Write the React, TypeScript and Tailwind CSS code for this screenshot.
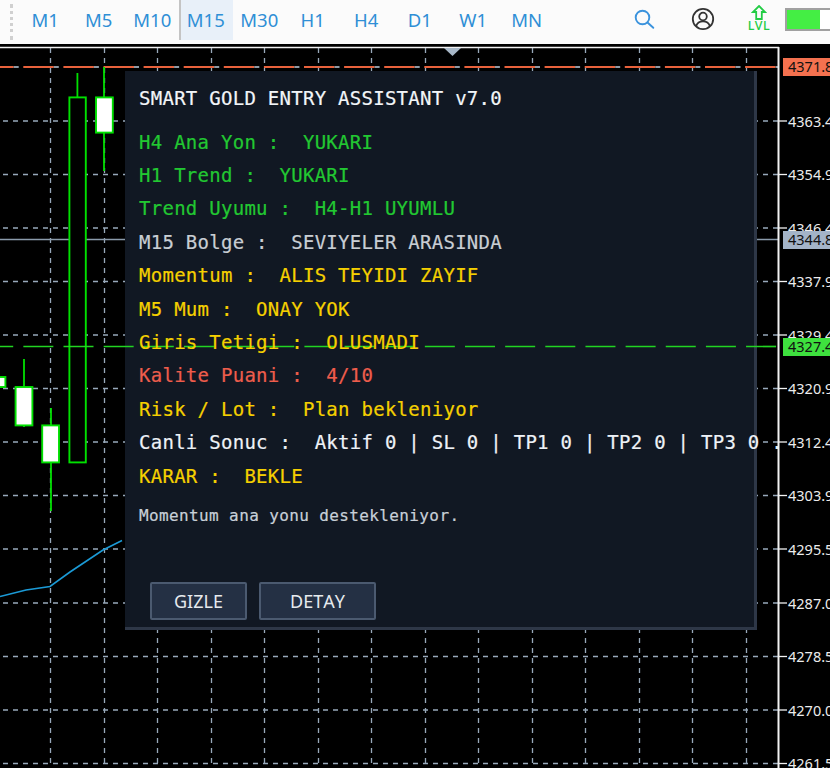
import React from "react";

const tabs = ["M1", "M5", "M10", "M15", "M30", "H1", "H4", "D1", "W1", "MN"];
const vx = [50.5, 104.5, 157.5, 211.5, 264.5, 318.5, 371.5, 425.5, 478.5, 532.5, 585.5, 639.5, 692.5, 746.5];
const hy = [121, 174.5, 228, 281.5, 335, 388.5, 442, 495.5, 549, 603, 656.5, 710, 763.5];
const ticks = ["4363.4", "4354.9", "4346.4", "4337.9", "4329.4", "4320.9", "4312.4", "4303.9", "4295.5", "4287.0", "4278.5", "4270.0", "4261.5"];

const rows: { text: string; color: string }[] = [
  { text: "H4 Ana Yon :  YUKARI", color: "text-[#22c832]" },
  { text: "H1 Trend :  YUKARI", color: "text-[#22c832]" },
  { text: "Trend Uyumu :  H4-H1 UYUMLU", color: "text-[#22c832]" },
  { text: "M15 Bolge :  SEVIYELER ARASINDA", color: "text-[#c9ced4]" },
  { text: "Momentum :  ALIS TEYIDI ZAYIF", color: "text-[#f5d000]" },
  { text: "M5 Mum :  ONAY YOK", color: "text-[#f5d000]" },
  { text: "Giris Tetigi :  OLUSMADI", color: "text-[#f5d000]" },
  { text: "Kalite Puani :  4/10", color: "text-[#ee5d4c]" },
  { text: "Risk / Lot :  Plan bekleniyor", color: "text-[#f5d000]" },
  { text: "Canli Sonuc :  Aktif 0 | SL 0 | TP1 0 | TP2 0 | TP3 0 .", color: "text-[#eef2f7]" },
  { text: "KARAR :  BEKLE", color: "text-[#f5d000]" },
];

const GREEN = "#00e000";

function Candle({ x, l, r, top, bottom, wt, wb, filled }: { x: number; l: number; r: number; top: number; bottom: number; wt: number; wb: number; filled?: boolean }) {
  return (
    <g>
      <line x1={x} x2={x} y1={wt} y2={wb} stroke={GREEN} strokeWidth={1.8} />
      <rect x={l} y={top} width={r - l} height={bottom - top} fill={filled ? "#ffffff" : "#000000"} stroke={GREEN} strokeWidth={1.9} />
    </g>
  );
}

function Toolbar() {
  return (
    <div className="flex h-[44px] shrink-0 items-start bg-[#fbfbfb] font-['Noto_Sans',sans-serif]">
      <div className="ml-[10px] mt-[4px] h-[36px] w-[8.5px] border-l-[3px] border-dotted border-[#d0d0d0]" />
      {tabs.map((t) => (
        <div
          key={t}
          className={
            "flex h-[40px] w-[53.5px] items-center justify-center text-[18.5px] text-[#2f8fd6] " +
            (t === "M15" ? "bg-[#e8f0f9] shadow-[inset_2px_0_0_#c4c4c4]" : "")
          }
        >
          {t}
        </div>
      ))}
      <div className="ml-[80.5px] mt-[9px] h-[21px] w-[21px]">
        <svg width="21" height="21" viewBox="0 0 21 21" fill="none" stroke="#3b93dd" strokeWidth="1.9" strokeLinecap="round">
          <circle cx="8.5" cy="8.5" r="6.8" />
          <line x1="13.5" y1="13.5" x2="19.3" y2="18.8" />
        </svg>
      </div>
      <div className="ml-[36px] mt-[7px] h-[24px] w-[24px]">
        <svg width="24" height="24" viewBox="0 0 24 24" fill="none" stroke="#333333" strokeWidth="1.8">
          <circle cx="12" cy="12" r="10.2" />
          <circle cx="12" cy="9.5" r="3.8" />
          <path d="M5.2 19c1-3.2 3.6-4.6 6.8-4.6s5.8 1.400 6.800 4.600" />
        </svg>
      </div>
      <div className="ml-[32px] mt-[5px] flex w-[24px] flex-col items-center">
        <svg width="16" height="15" viewBox="0 0 16 15" fill="none" stroke="#22cc44" strokeWidth="1.8">
          <path d="M8 1 L14 7 H10.800 V14 H5.200 V7 H2 Z" />
        </svg>
        <span className="mt-[-1px] text-[12.5px] font-medium leading-[13px] tracking-[0.5px] text-[#22cc44]">LVL</span>
      </div>
      <div className="ml-[14px] mt-[8px] flex h-[23px] flex-1 border-y-2 border-l-2 border-[#a0a0a0] bg-white">
        <div className="h-full w-[33px] bg-[#44ee44]" />
      </div>
    </div>
  );
}

function ChartDrawing() {
  return (
    <svg className="absolute inset-0 h-full w-full" viewBox="0 44 830 724" fill="none">
      {vx.map((x) => (
        <line key={x} x1={x} x2={x} y1={48} y2={768} stroke="#98a9ba" strokeWidth={1.3} strokeDasharray="5 5" />
      ))}
      {hy.map((y) => (
        <line key={y} x1={3} x2={778} y1={y} y2={y} stroke="#98a9ba" strokeWidth={1.3} strokeDasharray="5 5" />
      ))}
      <line x1={0} x2={778} y1={239.5} y2={239.5} stroke="#8b9bab" strokeWidth={1.6} />
      <line x1={-16.8} x2={778} y1={67} y2={67} stroke="#e8623c" strokeWidth={2} strokeDasharray="30.500 9.600" />
      <line x1={13.7} x2={778} y1={67} y2={67} stroke="#8e9aa6" strokeWidth={2} strokeDasharray="5 35.100" />
      <polyline points="0,596.500 26,590 50,586.500 70,572 103,550 122,540.500" stroke="#1b9ad6" strokeWidth={1.6} />
      <Candle x={77.4} l={69.4} r={85.8} top={97.4} bottom={462.4} wt={73} wb={97} />
      <Candle x={104} l={96} r={112.8} top={97.4} bottom={132.6} wt={67} wb={171} filled />
      <Candle x={51} l={42.2} r={59} top={425.4} bottom={462.4} wt={408} wb={511} filled />
      <Candle x={24} l={15.6} r={32.4} top={387} bottom={425.4} wt={359} wb={427} filled />
      <Candle x={-3} l={-12} r={5.4} top={377} bottom={387} wt={370} wb={395} filled />
      <line x1={0} x2={779} y1={47.5} y2={47.5} stroke="#f2f2f2" strokeWidth={1.5} />
      <line x1={778.5} x2={778.5} y1={47} y2={768} stroke="#f2f2f2" strokeWidth={2} />
      {hy.map((y) => (
        <line key={y} x1={779} x2={787} y1={y} y2={y} stroke="#f2f2f2" strokeWidth={1.3} />
      ))}
      <polygon points="444,48 461,48 452.500,56" fill="#a8b8c8" />
    </svg>
  );
}

function PriceTag({ text, bg, top }: { text: string; bg: string; top: string }) {
  return (
    <div className={"absolute left-[783px] flex h-[18px] w-[60px] items-center pl-[5px] text-[14.5px] text-[#111111] " + bg + " " + top}>
      {text}
    </div>
  );
}

function Axis() {
  return (
    <div className="font-['Noto_Sans',sans-serif]">
      {ticks.map((t, i) => (
        <div
          key={t}
          className="absolute left-[788px] text-[14.5px] leading-[16px] text-[#ececec]"
          style={{ top: hy[i] - 44 - 8.5 }}
        >
          {t}
        </div>
      ))}
      <PriceTag text="4371.8" bg="bg-[#f4714f]" top="top-[14px]" />
      <PriceTag text="4344.8" bg="bg-[#a4b4c8]" top="top-[187px]" />
      <PriceTag text="4327.4" bg="bg-[#3ee03e]" top="top-[294px]" />
    </div>
  );
}

function Panel() {
  return (
    <div className="absolute left-[125px] top-[27px] flex h-[559px] w-[632px] flex-col border-r-[3px] border-b-[3px] border-[#2e3747] bg-[#111823] pl-[14px] pt-[10.5px]">
      <div className="relative z-30 flex flex-col font-['DejaVu_Sans_Mono',monospace] text-[19px] leading-[33.4px] tracking-[0.27px] whitespace-pre [-webkit-text-stroke:0.2px]">
        <div className="mb-[10.6px] text-[#f2f5f8]">SMART GOLD ENTRY ASSISTANT v7.0</div>
        {rows.map((r) => (
          <div key={r.text} className={r.color}>
            {r.text}
          </div>
        ))}
        <div className="mt-[13px] text-[16px] leading-[20px] tracking-[0.38px] text-[#c8d0d8]">
          Momentum ana yonu destekleniyor.
        </div>
      </div>
      <div className="mt-auto mb-[7px] ml-[11px] flex gap-[12px] font-['Noto_Sans',sans-serif] text-[18px] text-[#e6eaee] [font-kerning:none]">
        <button className="h-[38px] w-[97px] rounded-[2px] border-2 border-[#4b5a70] bg-[#243044]">GIZLE</button>
        <button className="h-[38px] w-[117px] rounded-[2px] border-2 border-[#4b5a70] bg-[#243044]">DETAY</button>
      </div>
    </div>
  );
}

export default function App() {
  return (
    <div className="flex h-[768px] w-[830px] flex-col overflow-hidden bg-black">
      <Toolbar />
      <div className="relative flex-1 overflow-hidden bg-black">
        <ChartDrawing />
        <Axis />
        <Panel />
        <svg className="absolute inset-0 z-20 h-full w-full" viewBox="0 44 830 724" fill="none">
          <line x1={-16.8} x2={777} y1={346.5} y2={346.5} stroke="#22d422" strokeWidth={1.7} strokeDasharray="30 10.150" />
        </svg>
      </div>
    </div>
  );
}
